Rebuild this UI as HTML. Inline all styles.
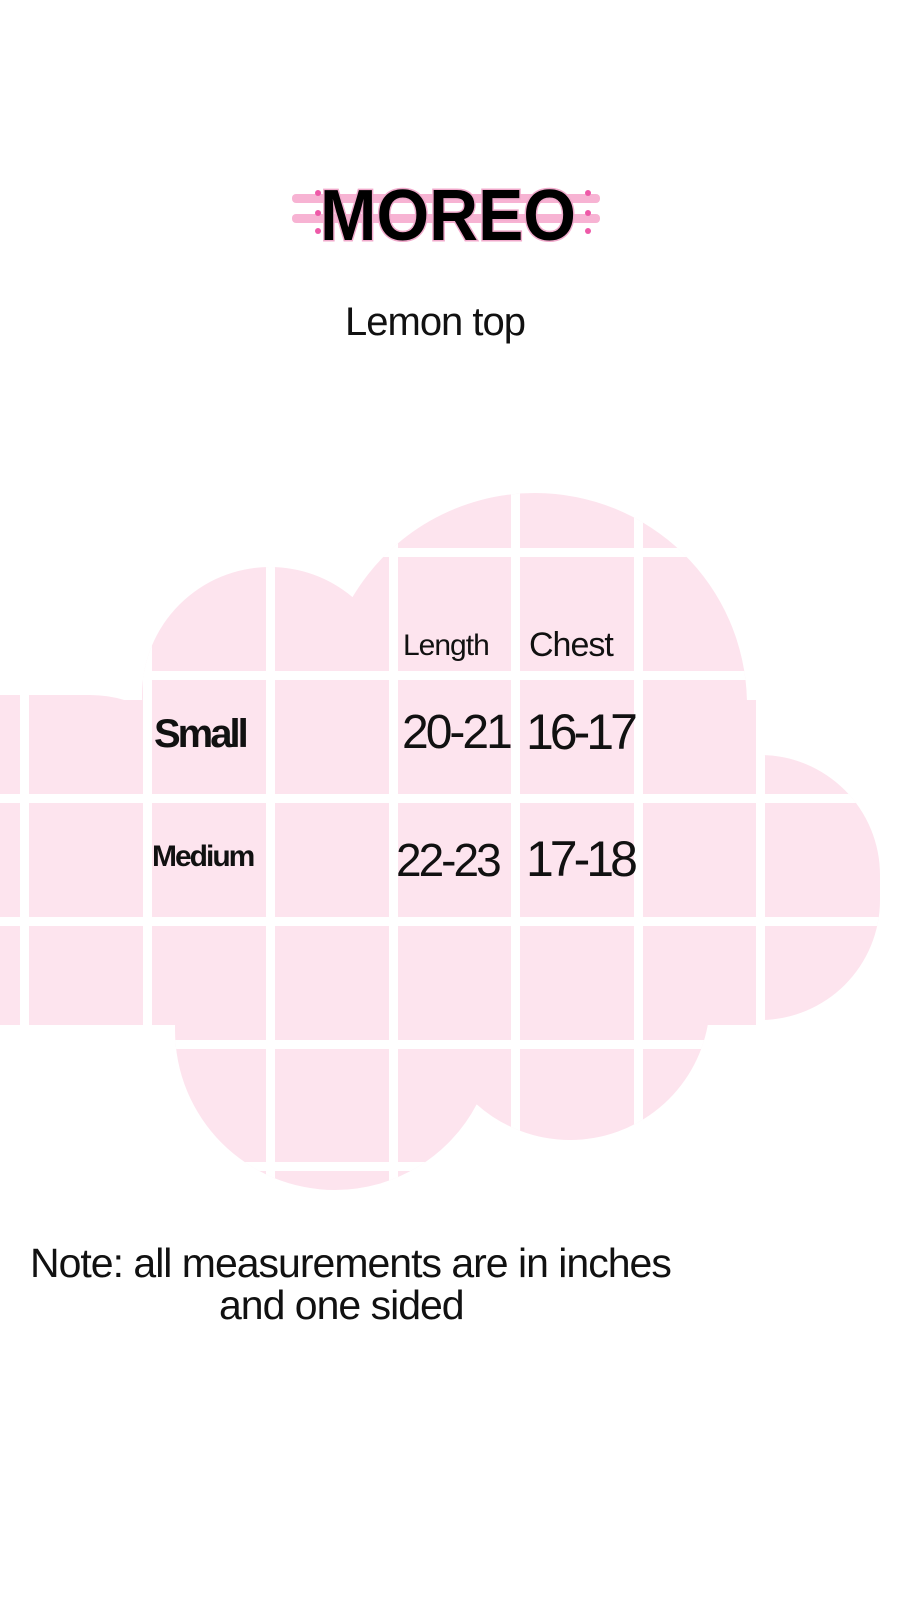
<!DOCTYPE html>
<html><head><meta charset="utf-8"><style>
html,body{margin:0;padding:0;background:#fff;}
body{width:900px;height:1600px;position:relative;overflow:hidden;font-family:"Liberation Sans",sans-serif;}
.t{position:absolute;color:#111;white-space:nowrap;}
</style></head><body>
<svg width="900" height="1600" style="position:absolute;left:0;top:0">
<defs>
<clipPath id="c">
<circle cx="535" cy="705" r="212"/>
<circle cx="270" cy="695" r="128"/>
<rect x="-120" y="695" width="330" height="330" rx="120"/>
<rect x="60" y="700" width="700" height="325"/>
<rect x="640" y="755" width="240" height="265" rx="120"/>
<circle cx="335" cy="1030" r="160"/>
<circle cx="570" cy="1000" r="140"/>
<rect x="175" y="980" width="530" height="50"/>
</clipPath>
</defs>
<g clip-path="url(#c)">
<rect x="0" y="480" width="900" height="720" fill="#fde4ee"/>
<g fill="#fff">
<rect x="20" y="480" width="9" height="720"/>
<rect x="143" y="480" width="9" height="720"/>
<rect x="266" y="480" width="9" height="720"/>
<rect x="389" y="480" width="9" height="720"/>
<rect x="511" y="480" width="9" height="720"/>
<rect x="634" y="480" width="9" height="720"/>
<rect x="756" y="480" width="9" height="720"/>
<rect x="0" y="548" width="900" height="9"/>
<rect x="0" y="671" width="900" height="9"/>
<rect x="0" y="794" width="900" height="9"/>
<rect x="0" y="917" width="900" height="9"/>
<rect x="0" y="1040" width="900" height="9"/>
<rect x="0" y="1162" width="900" height="9"/>
</g>
</g>
<g>
<rect x="292" y="194" width="308" height="9" rx="4" fill="#f7b3d3"/>
<rect x="292" y="214" width="308" height="9" rx="4" fill="#f7b3d3"/>
<circle cx="318" cy="193" r="3" fill="#ee5aa8"/><circle cx="318" cy="213" r="3" fill="#ee5aa8"/><circle cx="318" cy="231" r="3" fill="#ee5aa8"/>
<circle cx="588" cy="193" r="3" fill="#ee5aa8"/><circle cx="588" cy="213" r="3" fill="#ee5aa8"/><circle cx="588" cy="231" r="3" fill="#ee5aa8"/>
<text x="448" y="240" text-anchor="middle" font-family="Liberation Sans" font-weight="bold" font-size="72" textLength="256" lengthAdjust="spacingAndGlyphs" fill="#000" stroke="#f0a9cb" stroke-width="3" paint-order="stroke">MOREO</text>
</g>
</svg>
<div class="t" style="left:345px;top:300px;font-size:40px;letter-spacing:-1px;">Lemon top</div>
<div class="t" style="left:403px;top:629px;font-size:30px;letter-spacing:-1px;">Length</div>
<div class="t" style="left:529px;top:626px;font-size:34px;letter-spacing:-1px;">Chest</div>
<div class="t" style="left:154px;top:712px;font-size:40px;font-weight:bold;letter-spacing:-3px;">Small</div>
<div class="t" style="left:152px;top:840px;font-size:30px;font-weight:bold;letter-spacing:-2px;">Medium</div>
<div class="t" style="left:402px;top:705px;font-size:48px;letter-spacing:-3px;">20-21</div>
<div class="t" style="left:526px;top:703px;font-size:50px;letter-spacing:-4px;">16-17</div>
<div class="t" style="left:396px;top:833px;font-size:46px;letter-spacing:-3px;">22-23</div>
<div class="t" style="left:526px;top:830px;font-size:50px;letter-spacing:-4px;">17-18</div>
<div class="t" style="left:30px;top:1240px;font-size:41px;letter-spacing:-1px;">Note: all measurements are in inches</div>
<div class="t" style="left:219px;top:1282px;font-size:41px;letter-spacing:-1px;">and one sided</div>
</body></html>
